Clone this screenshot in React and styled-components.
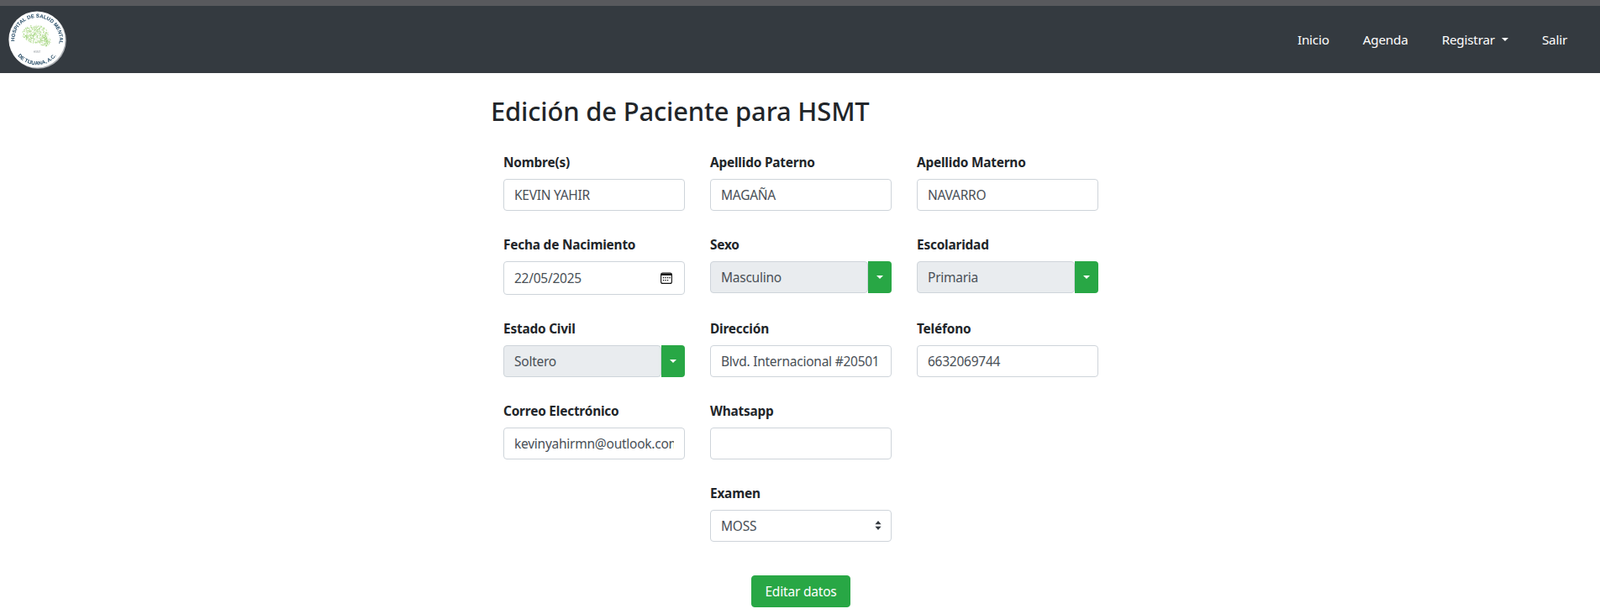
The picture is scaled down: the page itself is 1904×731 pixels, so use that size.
import React from "react";
import styled, { createGlobalStyle } from "styled-components";

const GlobalStyle = createGlobalStyle`
  * { box-sizing: border-box; }
  html, body { margin: 0; padding: 0; background: #fff; }
  body {
    font-family: "Noto Sans", "Open Sans", sans-serif;
    font-size: 15.5px;
    color: #212529;
  }
`;

const TopStrip = styled.div`
  height: 7px;
  background: #58595d;
`;

const Navbar = styled.nav`
  height: 80px;
  background: #343a40;
  display: flex;
  align-items: center;
  justify-content: space-between;
  padding: 0 39px 0 8px;
`;

const NavLinks = styled.div`
  display: flex;
  align-items: center;
  gap: 40px;
`;

const NavLink = styled.a`
  color: #fff;
  font-size: 15.25px;
  letter-spacing: -0.2px;
  display: flex;
  align-items: center;
`;

const Caret = styled.span`
  display: inline-block;
  width: 0;
  height: 0;
  margin-left: ${(p) => p.$gap || 0}px;
  border-top: 4.8px solid ${(p) => p.$color || "#fff"};
  border-left: 4.8px solid transparent;
  border-right: 4.8px solid transparent;
`;

const Main = styled.main`
  padding-left: 2px;
`;

const Container = styled.div`
  width: 738px;
  margin: 0 auto;
`;

const Title = styled.h2`
  margin: 0;
  padding-top: 25px;
  height: 95px;
  font-size: 30.9px;
  line-height: 40px;
  font-weight: 500;
  color: #212529;
  letter-spacing: -0.15px;
`;

const Grid = styled.div`
  display: grid;
  grid-template-columns: repeat(3, 216px);
  column-gap: 30px;
  padding: 0 15px;
`;

const Field = styled.div`
  grid-column: ${(p) => p.$col || "auto"};
  padding-bottom: 29px;
`;

const Label = styled.label`
  display: block;
  height: 24px;
  line-height: 24px;
  margin-bottom: 7px;
  font-size: 15.4px;
  font-weight: 700;
  letter-spacing: -0.2px;
  color: #212529;
`;

const Input = styled.input`
  display: block;
  width: 100%;
  height: ${(p) => p.$tall ? 40 : 38}px;
  padding: 6px 12px;
  font-family: inherit;
  font-size: 15.5px;
  letter-spacing: -0.25px;
  color: #495057;
  background: #fff;
  border: 1px solid #ced4da;
  border-radius: 4px;
  outline: none;
`;

const InputWrap = styled.div`
  position: relative;
`;

const CalendarMark = styled.svg`
  position: absolute;
  right: 15px;
  top: 13px;
  width: 14px;
  height: 14px;
`;

const InputGroup = styled.div`
  display: flex;
  height: 38px;
`;

const ReadOnlySelect = styled(Input)`
  flex: 1;
  min-width: 0;
  background: #e9ecef;
`;

const GroupButton = styled.button`
  width: 28px;
  flex: none;
  padding: 0;
  border: 0;
  border-radius: 0 4px 4px 0;
  background: #28a745;
  display: flex;
  align-items: center;
  justify-content: center;
`;

const SelectBox = styled.select`
  display: block;
  width: 100%;
  height: 38px;
  padding: 6px 12px;
  appearance: none;
  font-family: inherit;
  font-size: 15.5px;
  letter-spacing: -0.25px;
  color: #495057;
  background: #fff;
  border: 1px solid #ced4da;
  border-radius: 4px;
  outline: none;
`;

const SelectArrows = styled.svg`
  position: absolute;
  right: 12px;
  top: 13px;
  width: 8px;
  height: 11px;
  pointer-events: none;
`;

const Actions = styled.div`
  display: flex;
  justify-content: center;
  padding-top: 11px;
`;

const SubmitButton = styled.button`
  width: 118px;
  height: 38px;
  font-family: inherit;
  font-size: 15.5px;
  letter-spacing: -0.2px;
  color: #fff;
  background: #28a745;
  border: 1px solid #28a745;
  border-radius: 4px;
`;

const LogoMark = styled.svg`
  width: 72px;
  height: 72px;
  display: block;
  filter: blur(0.35px);
`;

// scattered green dots for the brain in the logo
const brainDots = () => {
  const dots = [];
  const rnd = (n) => {
    const v = Math.sin(n * 127.1) * 43758.5453;
    return v - Math.floor(v);
  };
  for (let i = 0; i < 380; i++) {
    const a = rnd(i) * Math.PI * 2;
    const r = Math.sqrt(rnd(i + 500));
    const x = 34 + Math.cos(a) * r * 15.5;
    const y = 29.5 + Math.sin(a) * r * 11;
    dots.push(
      <circle key={i} cx={x} cy={y} r={0.5} fill={i % 3 === 0 ? "#b4dc8e" : i % 3 === 1 ? "#8fcb68" : "#d5ecbf"} />
    );
  }
  for (let i = 0; i < 90; i++) {
    const a = rnd(i + 900) * Math.PI * 2;
    const r = Math.sqrt(rnd(i + 1300));
    const x = 45.5 + Math.cos(a) * r * 7;
    const y = 38 + Math.sin(a) * r * 6;
    dots.push(<circle key={`lobe${i}`} cx={x} cy={y} r={0.5} fill={i % 2 ? "#8fcb68" : "#b4dc8e"} />);
  }
  return dots;
};

const Logo = () => (
  <LogoMark viewBox="0 0 72 72">
    <defs>
      <path id="arcTop" d="M9.6 40 A26.7 26.7 0 1 1 62 43" />
      <path id="arcBottom" d="M10.5 52 A30 30 0 0 0 61.5 52" />
    </defs>
    <circle cx="37.2" cy="37.2" r="33.6" fill="#aeb2b6" />
    <circle cx="36" cy="36" r="33.6" fill="#fff" />
    {brainDots()}
    <text fontSize="6.1" fontWeight="700" fill="#173f5c" fontFamily="Liberation Sans, sans-serif">
      <textPath href="#arcTop" startOffset="50%" textAnchor="middle">HOSPITAL DE SALUD MENTAL</textPath>
    </text>
    <text fontSize="6.1" fontWeight="700" fill="#173f5c" fontFamily="Liberation Sans, sans-serif">
      <textPath href="#arcBottom" startOffset="50%" textAnchor="middle">DE TIJUANA, A.C.</textPath>
    </text>
    <text x="36" y="51.5" fontSize="3" textAnchor="middle" fill="#9aa0a6" fontFamily="Liberation Sans, sans-serif">HSMT</text>
  </LogoMark>
);

const SelectField = ({ label, value }) => (
  <Field>
    <Label>{label}</Label>
    <InputGroup>
      <ReadOnlySelect readOnly value={value} />
      <GroupButton type="button" aria-label={label}>
        <Caret $color="#fff" />
      </GroupButton>
    </InputGroup>
  </Field>
);

const TextField = ({ label, value, col }) => (
  <Field $col={col}>
    <Label>{label}</Label>
    <Input readOnly value={value} />
  </Field>
);

const App = () => (
  <>
    <GlobalStyle />
    <TopStrip />
    <Navbar>
      <Logo />
      <NavLinks>
        <NavLink>Inicio</NavLink>
        <NavLink>Agenda</NavLink>
        <NavLink>
          Registrar
          <Caret $gap={8} />
        </NavLink>
        <NavLink>Salir</NavLink>
      </NavLinks>
    </Navbar>
    <Main>
      <Container>
        <Title>Edición de Paciente para HSMT</Title>
        <Grid>
          <TextField label="Nombre(s)" value="KEVIN YAHIR" />
          <TextField label="Apellido Paterno" value="MAGAÑA" />
          <TextField label="Apellido Materno" value="NAVARRO" />
          <Field>
            <Label>Fecha de Nacimiento</Label>
            <InputWrap>
              <Input $tall readOnly value="22/05/2025" />
              <CalendarMark viewBox="0 0 14 14">
                <rect x="0.6" y="1" width="12.8" height="12.4" rx="2" fill="none" stroke="#111" strokeWidth="1.1" />
                <rect x="1" y="1.5" width="12" height="2.4" fill="#111" />
                {[3.5, 6, 8.5, 11].map((x) => (
                  <rect key={x} x={x - 0.6} y="6" width="1.3" height="1.3" fill="#111" />
                ))}
                {[3.5, 6, 8.5].map((x) => (
                  <rect key={x} x={x - 0.6} y="9" width="1.3" height="1.3" fill="#111" />
                ))}
              </CalendarMark>
            </InputWrap>
          </Field>
          <SelectField label="Sexo" value="Masculino" />
          <SelectField label="Escolaridad" value="Primaria" />
          <SelectField label="Estado Civil" value="Soltero" />
          <TextField label="Dirección" value="Blvd. Internacional #20501" />
          <TextField label="Teléfono" value="6632069744" />
          <TextField label="Correo Electrónico" value="kevinyahirmn@outlook.com" />
          <TextField label="Whatsapp" value="" col="2" />
          <Field $col="2">
            <Label>Examen</Label>
            <InputWrap>
              <SelectBox defaultValue="MOSS">
                <option>MOSS</option>
              </SelectBox>
              <SelectArrows viewBox="0 0 8 11">
                <path d="M4 0 L7.6 4.2 H0.4 Z M4 11 L0.4 6.8 H7.6 Z" fill="#343a40" />
              </SelectArrows>
            </InputWrap>
          </Field>
        </Grid>
        <Actions>
          <SubmitButton type="button">Editar datos</SubmitButton>
        </Actions>
      </Container>
    </Main>
  </>
);

export default App;
